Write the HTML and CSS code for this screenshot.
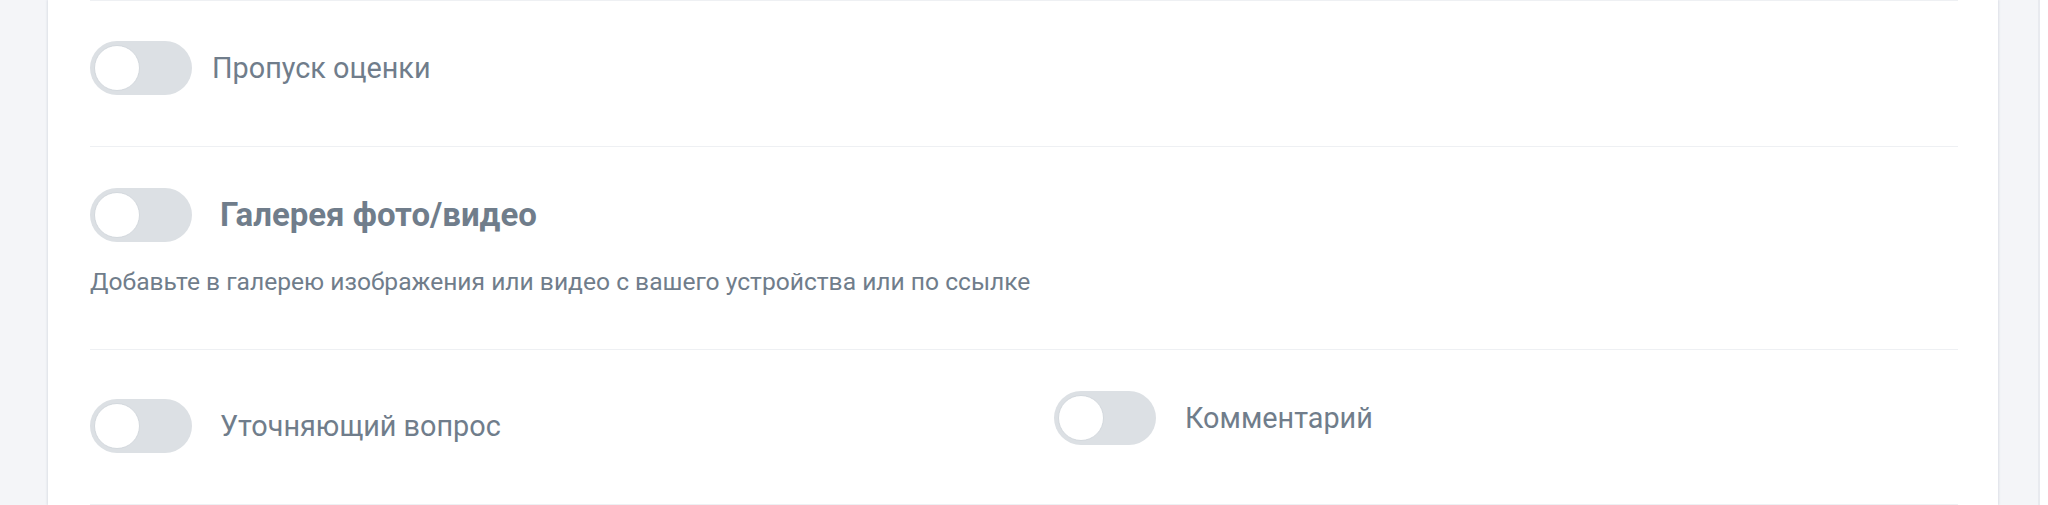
FILE: index.html
```html
<!DOCTYPE html>
<html lang="ru">
<head>
<meta charset="utf-8">
<title>Настройки вопроса</title>
<link rel="stylesheet" href="styles.css">
</head>
<body>
<div class="page">
  <main class="main">
    <section class="card">
      <div class="section section-first">
        <label class="switch-row switch-row-tight">
          <span class="toggle"><span class="knob"></span></span>
          <span class="label">Пропуск оценки</span>
        </label>
      </div>
      <div class="section section-gallery">
        <label class="switch-row">
          <span class="toggle"><span class="knob"></span></span>
          <span class="title">Галерея фото/видео</span>
        </label>
        <p class="desc">Добавьте в галерею изображения или видео с вашего устройства или по ссылке</p>
      </div>
      <div class="section section-grid">
        <label class="switch-row switch-row-offset">
          <span class="toggle"><span class="knob"></span></span>
          <span class="label">Уточняющий вопрос</span>
        </label>
        <label class="switch-row switch-row-right">
          <span class="toggle"><span class="knob"></span></span>
          <span class="label">Комментарий</span>
        </label>
      </div>
      <div class="section section-end"></div>
    </section>
  </main>
  <div class="scrollbar"></div>
</div>
</body>
</html>
```

FILE: styles.css
```css
* { box-sizing: border-box; }

html, body {
  margin: 0;
  padding: 0;
  height: 100%;
  overflow: hidden;
}

body {
  background: #f4f5f8;
  font-family: Roboto, "Noto Sans", "Liberation Sans", sans-serif;
  color: #707d8b;
}

.page {
  display: flex;
  height: 100%;
}

.main {
  flex: 1;
  padding: 0 40px 0 48px;
}

.card {
  background: #ffffff;
  min-height: 100%;
  padding: 0 40px 0 42px;
  box-shadow: -1px 0 2px rgba(160, 168, 185, 0.25), 1px 0 2px rgba(160, 168, 185, 0.25);
}

.scrollbar {
  width: 10px;
  background: #ffffff;
  border-left: 2px solid #e8eaef;
}

.section {
  border-top: 1px solid #eef0f3;
}

.section-first {
  padding: 40px 0 51px;
}

.section-gallery {
  padding: 41px 0 53px;
}

.section-grid {
  display: grid;
  grid-template-columns: 1fr 1fr;
  column-gap: 60px;
  align-items: start;
  padding: 41px 0 51px;
}

.switch-row {
  display: flex;
  align-items: center;
  gap: 28px;
}

.switch-row-tight {
  gap: 20px;
}

.switch-row-right {
  gap: 29px;
}

.switch-row-offset {
  margin-top: 8px;
}

.toggle {
  flex: none;
  display: flex;
  align-items: center;
  width: 102px;
  height: 54px;
  padding: 0 4px;
  border-radius: 27px;
  background: #dce0e4;
}

.knob {
  width: 46px;
  height: 46px;
  border-radius: 50%;
  background: #ffffff;
  border: 1px solid #d3d8dd;
}

.label {
  font-size: 28.8px;
  font-weight: 400;
  line-height: 34px;
  color: #707d8b;
}

.title {
  font-size: 33px;
  font-weight: 700;
  line-height: 38px;
  color: #707d8b;
}

.desc {
  margin: 26px 0 0;
  font-size: 24.6px;
  line-height: 28px;
  color: #707d8b;
}
```
